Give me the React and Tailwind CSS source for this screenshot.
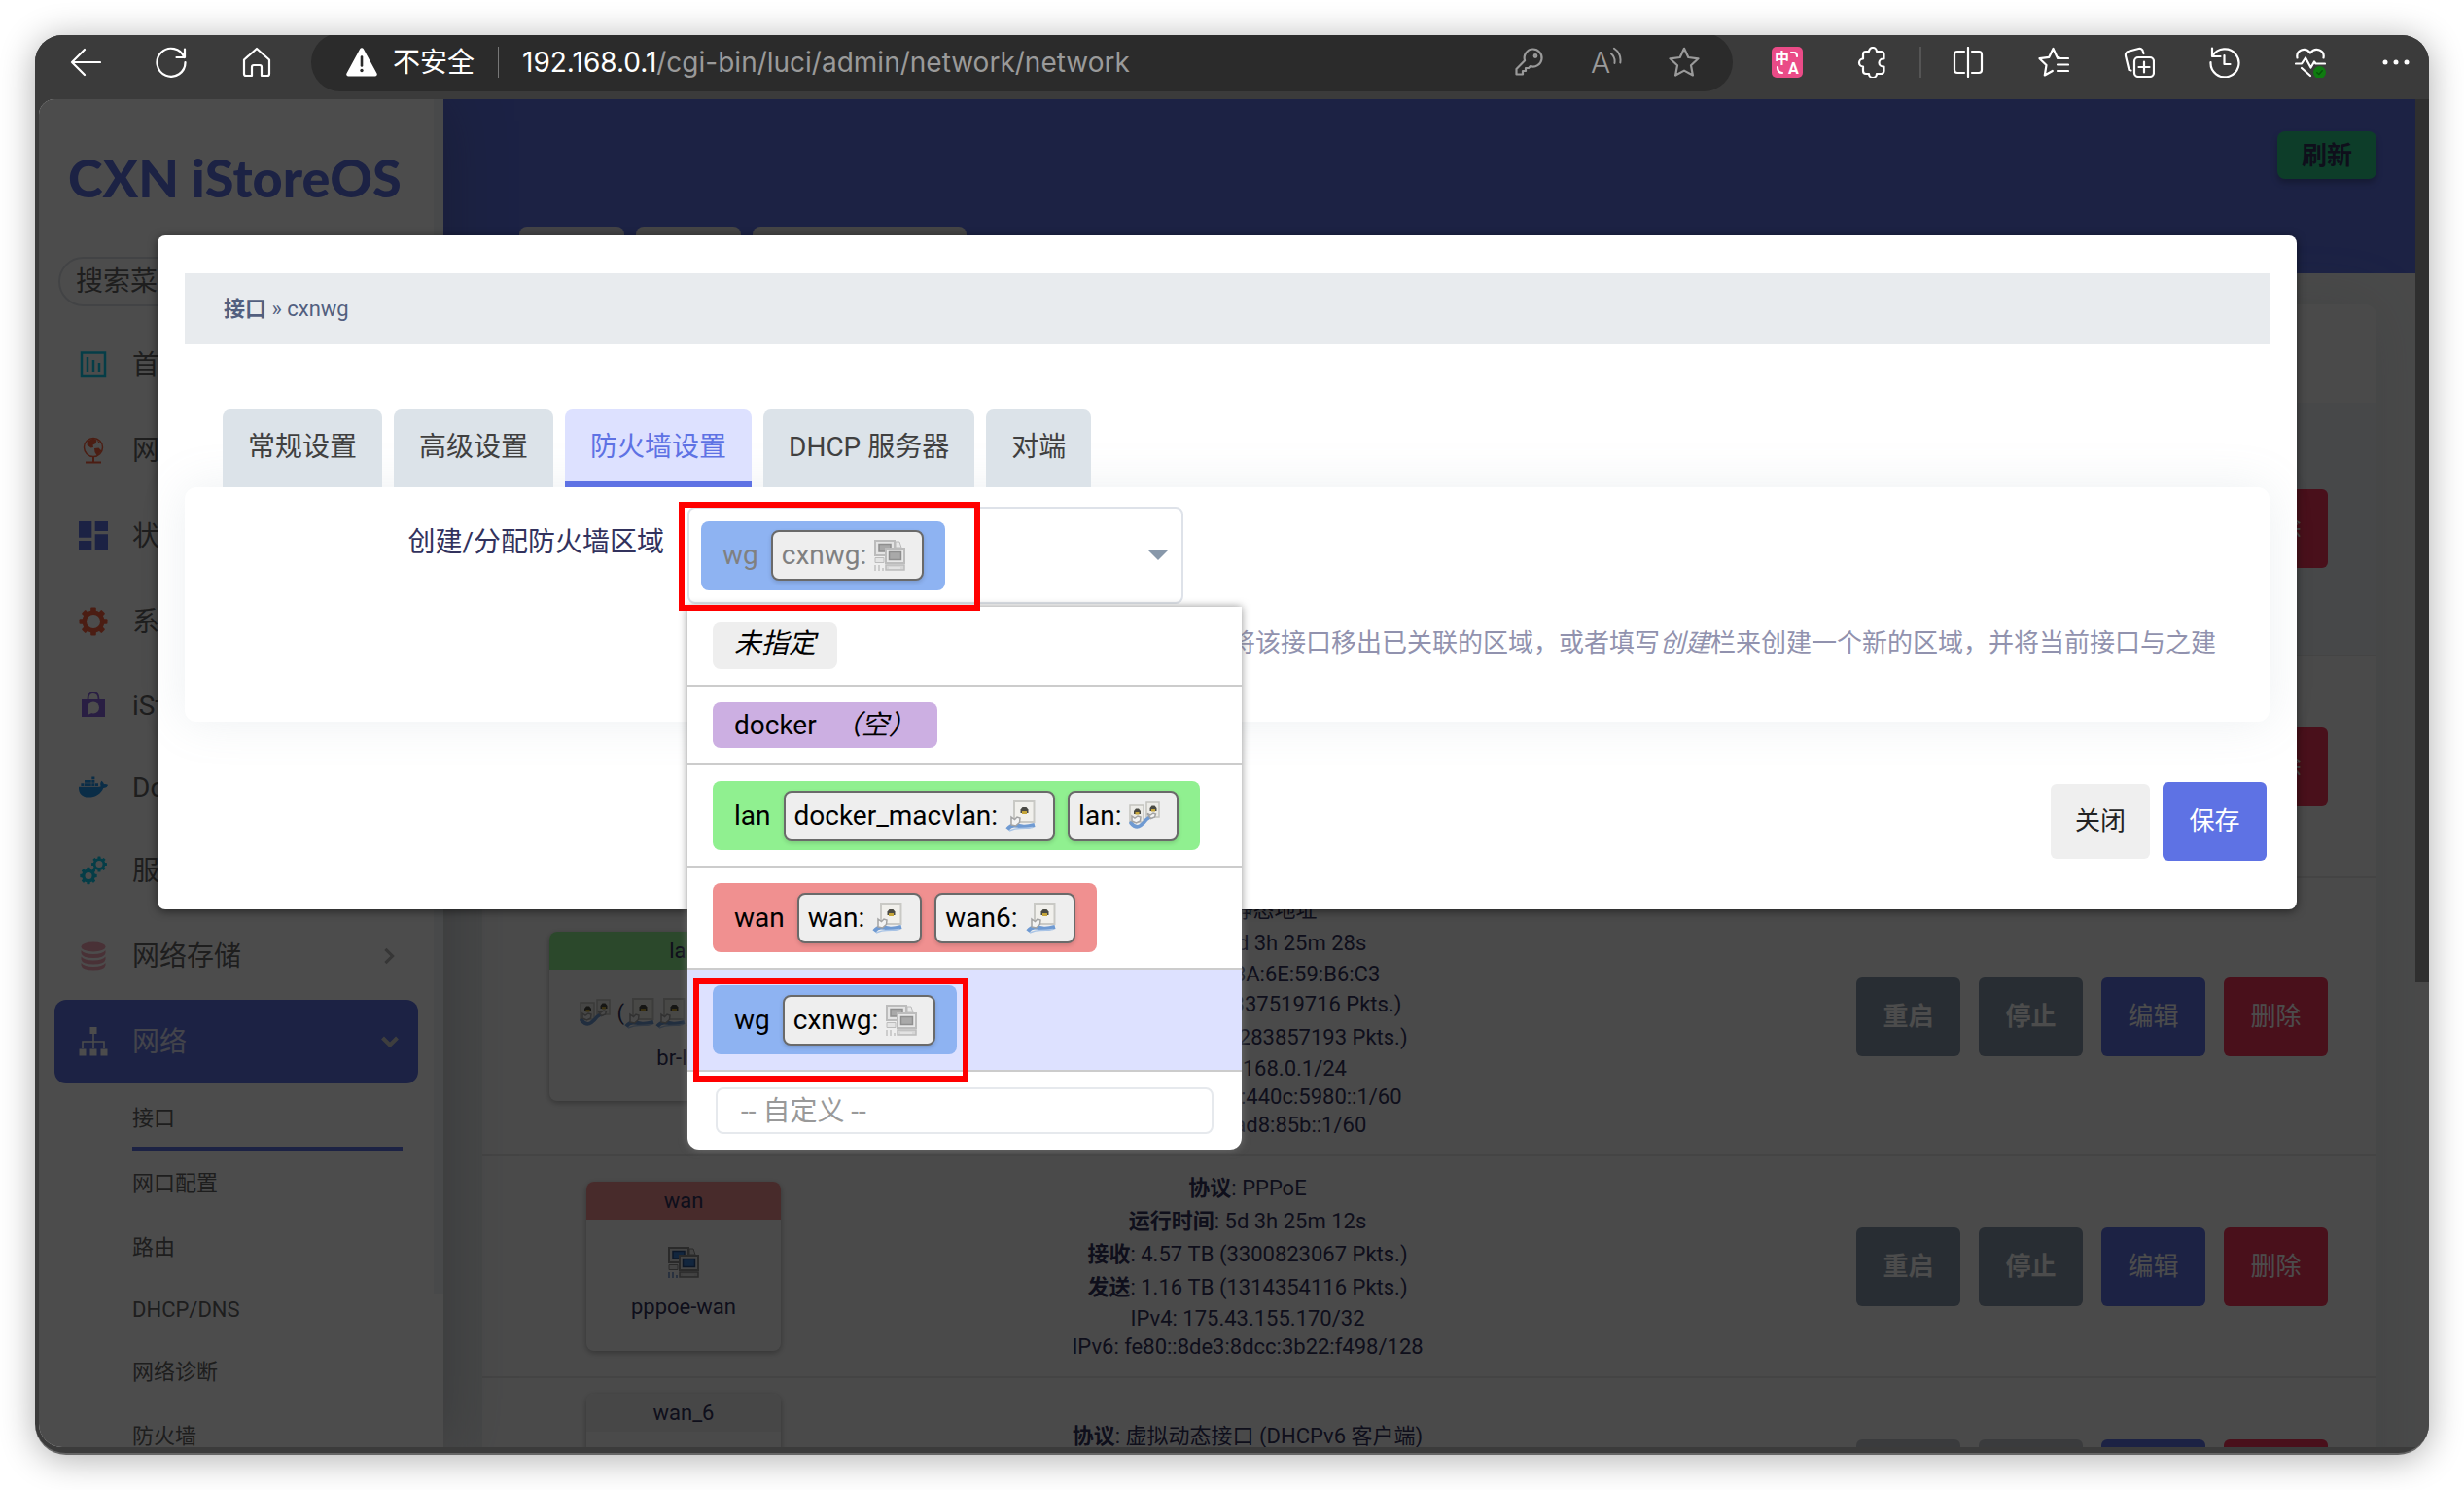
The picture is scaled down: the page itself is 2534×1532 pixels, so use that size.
import React from "react";
import { FaDocker } from "react-icons/fa";
import { MdDashboard } from "react-icons/md";

/* ---------- toolbar icons ---------- */

function Line({ children, className = "size-8 text-white" }) {
  return (
    <svg viewBox="0 0 32 32" className={className} fill="none" stroke="currentColor" strokeWidth="2.2" strokeLinecap="round" strokeLinejoin="round" aria-hidden="true">
      {children}
    </svg>
  );
}

const BackIcon = () => (
  <Line>
    <path d="M15 3 2 16l13 13M2 16h29" />
  </Line>
);
const ReloadIcon = () => (
  <Line>
    <path d="M29.5 11A14.5 14.5 0 1 0 30.5 16M30 2.500v8.500h-8.500" />
  </Line>
);
const HomeIcon = () => (
  <Line>
    <path d="M3 13.500 16 2l13 11.500V28a2 2 0 0 1-2 2h-6V21a2 2 0 0 0-2-2h-6a2 2 0 0 0-2 2v9H5a2 2 0 0 1-2-2z" />
  </Line>
);
const WarningIcon = () => (
  <svg viewBox="0 0 32 32" className="size-8 text-white" aria-hidden="true">
    <path d="M14.200 2.200a2.100 2.100 0 0 1 3.600 0L31.500 27.500a2.100 2.100 0 0 1-1.800 3.100H2.300a2.100 2.100 0 0 1-1.800-3.100z" fill="currentColor" />
    <path d="M16 10.500v9" stroke="#2b2b2b" strokeWidth="2.600" strokeLinecap="round" />
    <circle cx="16" cy="24.500" r="1.700" fill="#2b2b2b" />
  </svg>
);
const KeyIcon = () => (
  <Line className="size-8 text-[#9a9a9a]">
    <path d="M20 3a9 9 0 1 1-2.600 17.600L15.500 22.500H12.500v3H9.500v3.500H3v-5.500L11.600 14.800A9 9 0 0 1 20 3z" transform="translate(.5 -.5)" />
    <circle cx="23" cy="9.500" r="1.300" />
  </Line>
);
const ReadAloudIcon = () => (
  <span className="flex size-8 items-center text-[#9a9a9a]">
    <span className="text-[30px] leading-8 font-light">A</span>
    <svg viewBox="0 0 12 32" className="h-8 w-3" fill="none" stroke="currentColor" strokeWidth="2" strokeLinecap="round" aria-hidden="true">
      <path d="M1 7q4.500 4 3.500 10M4 1.500q8 5.500 6.500 15" />
    </svg>
  </span>
);
const StarIcon = () => (
  <Line className="size-8 text-[#9a9a9a]">
    <path d="m16 1.800 4.300 9.200 10.200 1.300-7.500 7 1.900 10.200L16 24.600 7.100 29.500 9 19.300l-7.500-7L11.700 11z" />
  </Line>
);
const TranslateIcon = () => (
  <svg viewBox="0 0 32 32" className="size-8" aria-hidden="true">
    <rect width="32" height="32" rx="5" fill="#ea4b87" />
    <text x="3" y="17" fontSize="15" fontWeight="700" fill="#fff">中</text>
    <text x="17" y="28" fontSize="16" fontWeight="700" fill="#fff">A</text>
    <path d="M20 6h3q3 0 3 4M6 21q0 6 5 6" fill="none" stroke="#fff" strokeWidth="2.200" strokeLinecap="round" />
  </svg>
);
const PuzzleIcon = () => (
  <Line>
    <path d="M6 8a3 3 0 0 1 3-3h3a4 4 0 0 1 8 0h4.500a3 3 0 0 1 3 3v4.500h-1a4 4 0 0 0 0 8h1V25a3 3 0 0 1-3 3H20a4 4 0 0 1-8 0H9a3 3 0 0 1-3-3v-4.500a4 4 0 0 1 0-8z" />
  </Line>
);
const SplitIcon = () => (
  <Line>
    <path d="M12 5H5a3 3 0 0 0-3 3v16a3 3 0 0 0 3 3h7M20 5h7a3 3 0 0 1 3 3v16a3 3 0 0 1-3 3h-7M16 1v30" />
  </Line>
);
const FavoritesIcon = () => (
  <Line>
    <path d="M22 11.500 19.500 10.800 15.500 2 11.300 10.800 1.500 12.200l7 6.800-1.700 10.500 8-4.500M20 12h11M20 18.500h11M20 25h11" />
  </Line>
);
const CollectionsIcon = () => (
  <Line>
    <rect x="11" y="11" width="20" height="20" rx="4" />
    <path d="M21 15.500v11M15.500 21h11M7.500 24.500 5.500 24 2 9.500a4 4 0 0 1 3-4.800L15.500 2a3.500 3.500 0 0 1 4.300 2.600L20.500 7" />
  </Line>
);
const HistoryIcon = () => (
  <Line>
    <path d="M3 1.500V10h8.500M3.500 9.500A14.500 14.500 0 1 1 1.500 16M15.500 9v9h6" />
  </Line>
);
const HealthIcon = () => (
  <Line>
    <path d="M2.500 11.500C1 4 10.500-.5 16 6.500c5.500-7 15-2.500 13.500 5M1 17.500h6l4-6 5.500 10 3.500-6 1.500 2H31M7 22l9 8" />
    <circle cx="25.500" cy="26.500" r="6.500" fill="#0f7b10" stroke="none" />
    <path d="m22.800 26.700 2 1.800 3.400-3.800" stroke="#07530a" strokeWidth="1.500" />
  </Line>
);
const MoreIcon = () => (
  <svg viewBox="0 0 32 32" className="size-8 text-white" fill="currentColor" aria-hidden="true">
    <circle cx="5" cy="16" r="2.500" />
    <circle cx="16" cy="16" r="2.500" />
    <circle cx="27" cy="16" r="2.500" />
  </svg>
);

/* ---------- sidebar icons ---------- */

const Bars = () => (
  <svg viewBox="0 0 28 28" className="size-7" fill="none" stroke="#11cdef" aria-hidden="true">
    <path d="M2 1.500h24v24.500H2z" strokeWidth="2.500" />
    <path d="M8 6v15M14 9v12M20 12v9" strokeWidth="2.500" />
  </svg>
);
const Globe = () => (
  <svg viewBox="0 0 28 28" className="size-7" aria-hidden="true">
    <circle cx="14" cy="11" r="9.500" fill="none" stroke="#fb6340" strokeWidth="1.500" />
    <path d="M8 4.500 14 1.500l3.500 2-1 3.500-3 1.500.5 2.500-2.500.5-4-3zM15 12l4.500-.5 3 3L18 20l-2.500-4zM18 3.500l3 2.500-1.500 1z" fill="#fb6340" />
    <path d="M6 26.500h16M14 21v5" stroke="#fb6340" strokeWidth="2" fill="none" />
  </svg>
);
function GearShape({ cx, cy, s }) {
  return (
    <g transform={`translate(${cx} ${cy}) scale(${s})`}>
      {[0, 45, 90, 135].map((a) => (
        <rect key={a} x="-2.8" y="-14.500" width="5.600" height="29" rx="1" transform={`rotate(${a})`} />
      ))}
      <circle r="11.500" />
    </g>
  );
}
const Gear = () => (
  <svg viewBox="0 0 30 30" className="size-[30px]" aria-hidden="true">
    <defs>
      <mask id="gear-hole">
        <rect width="30" height="30" fill="#fff" />
        <circle cx="15" cy="15" r="7" fill="#000" />
      </mask>
    </defs>
    <g fill="#fb6340" mask="url(#gear-hole)">
      <GearShape cx={15} cy={15} s={1} />
    </g>
  </svg>
);
const Gears = () => (
  <svg viewBox="0 0 30 30" className="size-[30px]" aria-hidden="true">
    <defs>
      <mask id="gears-hole">
        <rect width="30" height="30" fill="#fff" />
        <circle cx="10" cy="20.500" r="3.500" fill="#000" />
        <circle cx="21" cy="8.500" r="3.500" fill="#000" />
      </mask>
    </defs>
    <g fill="#11cdef" mask="url(#gears-hole)">
      <GearShape cx={10} cy={20.5} s={0.6} />
      <GearShape cx={21} cy={8.5} s={0.55} />
    </g>
  </svg>
);
const Bag = () => (
  <svg viewBox="0 0 28 28" className="size-7" aria-hidden="true">
    <path d="M2 8h24v18H2z" fill="#8965e0" />
    <path d="M8.500 8q0-7 5.500-7t5.500 7" fill="none" stroke="#8965e0" strokeWidth="1.800" />
    <circle cx="14" cy="16.500" r="6" fill="#fff" />
    <path d="m8 24 1.500-6 4 3.500z" fill="#fff" />
  </svg>
);
const Disks = () => (
  <svg viewBox="0 0 28 30" className="h-[30px] w-7" fill="#f3a4b5" aria-hidden="true">
    <ellipse cx="14" cy="5.500" rx="12.500" ry="5" />
    <path d="M1.500 9q3 4 12.500 4t12.500-4v3q-1 5-12.500 5T1.500 12zM1.500 15.500q3 4 12.500 4t12.500-4v3q-1 5-12.500 5t-12.500-5zM1.500 22q3 4 12.500 4t12.500-4v2.500q-1 5-12.500 5t-12.500-5z" />
  </svg>
);
const Tree = () => (
  <svg viewBox="0 0 30 30" className="size-[30px]" aria-hidden="true">
    <path d="M11.500 0h7v7h-7zM.5 22.500h7v7h-7zM11.500 22.500h7v7h-7zM22.500 22.500h7v7h-7z" fill="#fff" />
    <path d="M15 7v15M4 22v-7h22v7" fill="none" stroke="#fff" strokeWidth="1.500" />
  </svg>
);

/* ---------- network device icons ---------- */

function TunnelIcon({ active = false }) {
  const screen = active ? "#3f7fd0" : "#a9a9a9";
  const edge = active ? "#8c8c8c" : "#bcbcbc";
  return (
    <svg viewBox="0 0 32 32" className="size-8 shrink-0" aria-hidden="true">
      <path d="M22 2h4l2 6h-6z" fill="#e8e8e8" stroke={edge} />
      <rect x="1" y="1" width="20" height="15" fill="#e4e4e4" stroke={edge} strokeWidth="2" />
      <rect x="5" y="4.500" width="12" height="7.500" fill={screen} stroke={active ? "#2b4f86" : "#8f8f8f"} strokeWidth="1.500" />
      <path d="M1 18.500h9v5H1z" fill="#e4e4e4" stroke={edge} />
      <path d="M1 26v6M5 26v6M9 29v3" stroke={active ? "#6d92c8" : "#c4c4c4"} strokeWidth="1.600" />
      <rect x="12" y="9" width="19" height="15" fill="#e8e8e8" stroke={edge} strokeWidth="2" />
      <rect x="15.500" y="12.500" width="12" height="8" fill={screen} stroke={active ? "#2b4f86" : "#8f8f8f"} strokeWidth="1.500" />
      <path d="M12 26h19v5H12z" fill="#d6d6d6" stroke={edge} strokeWidth="1.500" />
      <path d="M15 29h12" stroke="#eee" />
    </svg>
  );
}
function PortIcon() {
  return (
    <svg viewBox="0 0 32 32" className="size-8 shrink-0" aria-hidden="true">
      <rect x="9" y="1" width="20.500" height="21" fill="#f1f0ec" stroke="#c9c9c5" strokeWidth="2" />
      <path d="M15.500 13V9.500L17.500 7h4L23.500 9.500V13z" fill="#4a4a44" />
      <path d="M17 11h5v3h-5z" fill="#c6a63a" />
      <path d="M2 29.500q3-4 7-4t8 1 13-1.500" fill="none" stroke="#6f9ad2" strokeWidth="4" />
      <path d="M4 31q6-2.500 11-2.500t13-1" fill="none" stroke="#a9c4e6" strokeWidth="1.500" />
      <path d="m6 17 3.500 2.500L12 17l3 1-.5 4.500-4 3.500-4.500-1z" fill="#f3f3f3" stroke="#a3a3a3" strokeWidth="1.500" />
    </svg>
  );
}
function SwitchIcon() {
  return (
    <svg viewBox="0 0 32 32" className="size-8 shrink-0" aria-hidden="true">
      <rect x="18" y="2" width="13" height="15" fill="#ecebe7" stroke="#c3c3bf" strokeWidth="1.500" />
      <rect x="1" y="5" width="14" height="17" fill="#ecebe7" stroke="#c3c3bf" strokeWidth="1.500" />
      <path d="M21.500 11V8l2-2.500h3l2 2.500v3zM5 14v-3l2-2.500h3l2 2.500v3z" fill="#4a4a44" />
      <path d="M23 9h4v2.500h-4zM6.500 12h4v2.500h-4z" fill="#c6a63a" />
      <path d="M2 23q5 6 10 2.500 4-3 6-6 2-2 6-3" fill="none" stroke="#6f9ad2" strokeWidth="3.600" strokeLinecap="round" />
      <path d="m3 16 3 2 3-2 3 1-.5 4-4 2-4.500-2zM19 13.500l3 1.500 3-2 2.500 1-1 3-4 1.500z" fill="#f3f3f3" stroke="#a3a3a3" strokeWidth="1.500" />
    </svg>
  );
}

/* ---------- browser toolbar ---------- */

function ToolButton({ label, children }) {
  return (
    <button type="button" aria-label={label} className="size-8 shrink-0">
      {children}
    </button>
  );
}

function BrowserBar() {
  return (
    <header className="flex h-[66px] shrink-0 items-center bg-[#3b3b3b] pr-[18px] pb-2.5 pl-9">
      <div className="flex gap-14">
        <ToolButton label="后退"><BackIcon /></ToolButton>
        <ToolButton label="刷新页面"><ReloadIcon /></ToolButton>
        <ToolButton label="主页"><HomeIcon /></ToolButton>
      </div>
      <div className="mx-10 flex h-[60px] flex-1 items-center rounded-full bg-[#2b2b2b] pr-[34px] pl-9 font-['Inter','Noto_Sans_CJK_SC',sans-serif] text-[28px] text-white">
        <WarningIcon />
        <span className="ml-4">不安全</span>
        <span className="mx-6 h-8 w-px bg-[#777]" />
        <span className="flex-1 text-[#9a9a9a]">
          <span className="text-white">192.168.0.1</span>/cgi-bin/luci/admin/network/network
        </span>
        <div className="flex gap-12">
          <ToolButton label="密码"><KeyIcon /></ToolButton>
          <ToolButton label="大声朗读"><ReadAloudIcon /></ToolButton>
          <ToolButton label="收藏此页"><StarIcon /></ToolButton>
        </div>
      </div>
      <div className="flex gap-14">
        <ToolButton label="翻译"><TranslateIcon /></ToolButton>
        <ToolButton label="扩展"><PuzzleIcon /></ToolButton>
      </div>
      <span className="mx-8 h-8 w-0.5 bg-[#555]" />
      <div className="flex gap-14">
        <ToolButton label="分屏"><SplitIcon /></ToolButton>
        <ToolButton label="收藏夹"><FavoritesIcon /></ToolButton>
        <ToolButton label="集锦"><CollectionsIcon /></ToolButton>
        <ToolButton label="历史记录"><HistoryIcon /></ToolButton>
        <ToolButton label="浏览器概要"><HealthIcon /></ToolButton>
        <ToolButton label="更多"><MoreIcon /></ToolButton>
      </div>
    </header>
  );
}

/* ---------- sidebar ---------- */

const menu = [
  { icon: <Bars />, text: "首页" },
  { icon: <Globe />, text: "网络向导" },
  { icon: <MdDashboard className="size-10 shrink-0 text-[#5e72e4]" />, text: "状态" },
  { icon: <Gear />, text: "系统" },
  { icon: <Bag />, text: "iStore", latin: true },
  { icon: <FaDocker className="size-[30px] text-[#2496ed]" />, text: "Docker", latin: true },
  { icon: <Gears />, text: "服务" },
];
const submenu = [
  { text: "网口配置" },
  { text: "路由" },
  { text: "DHCP/DNS", latin: true },
  { text: "网络诊断" },
  { text: "防火墙" },
];

function MenuRow({ icon, text, latin, children }) {
  return (
    <a href="#menu" className={`mx-4 flex items-center gap-6 pr-6 pl-6 text-[28px] text-[#666] ${latin ? "h-[84px]" : "h-[88px]"}`}>
      <span className="flex w-8 justify-center">{icon}</span>
      <span className="flex-1 pt-0.5">{text}</span>
      {children}
    </a>
  );
}

function Sidebar() {
  return (
    <aside className="z-10 flex w-[416px] shrink-0 bg-white shadow-[0_0_64px_rgba(60,70,85,0.35)]">
      <div className="min-w-0 flex-1">
        <h1 className="flex h-[160px] items-center pl-[30px] font-['Lato',sans-serif] text-[54px] font-black whitespace-nowrap text-[#5e72e4]">CXN iStoreOS</h1>
        <div className="mx-5 mt-0.5 mb-4">
          <input aria-label="搜索菜单" placeholder="搜索菜单" className="h-[51px] w-full rounded-full border-2 border-[#dee2e6] px-4 text-[28px] placeholder:text-[#666]" />
        </div>
        <nav>
          {menu.map((m) => (
            <MenuRow key={m.text} {...m} />
          ))}
          <MenuRow icon={<Disks />} text="网络存储">
            <svg viewBox="0 0 12 20" className="h-[18px] w-3" fill="none" stroke="#b4b4b4" strokeWidth="3.500" aria-hidden="true">
              <path d="m2 2 8 8-8 8" />
            </svg>
          </MenuRow>
          <a href="#network" className="mx-4 my-px flex h-[86px] items-center gap-6 rounded-xl bg-[#5e72e4] pr-5 pl-6 text-[28px] text-white/80">
            <span className="flex w-8 justify-center"><Tree /></span>
            <span className="flex-1 pt-0.5">网络</span>
            <svg viewBox="0 0 18 12" className="h-3 w-[18px]" fill="none" stroke="#d0d0d0" strokeWidth="4" aria-hidden="true">
              <path d="m1.500 2 7.500 7.500L16.500 2" />
            </svg>
          </a>
          <div className="mr-8 ml-24 text-[22px] text-[#666]">
            <a href="#interface" className="flex h-[68px] items-center border-b-4 border-[#5e72e4] pt-1">接口</a>
            {submenu.map((s) => (
              <a key={s.text} href="#sub" className={`flex items-center ${s.latin ? "h-[62px]" : "h-[66px]"}`}>{s.text}</a>
            ))}
          </div>
        </nav>
      </div>
      <div className="w-2.5">
        <div className="h-[1228px] bg-[#f1f3f7]" />
      </div>
    </aside>
  );
}

/* ---------- interface table ---------- */

function ZoneCard({ name, head, device, width, children }) {
  return (
    <div className={`mx-auto overflow-hidden rounded-lg text-center text-[22px] shadow-[0_2px_6px_rgba(0,0,0,0.3)] ${width}`}>
      <div className={`flex h-[39px] items-center justify-center ${head}`}>{name}</div>
      <div className="h-[135px] pt-7">
        <div className="flex items-center justify-center">{children}</div>
        <div className="mt-4 leading-7">{device}</div>
      </div>
    </div>
  );
}

function Info({ rows }) {
  return rows.map(([label, value, bold = true]) => (
    <div key={label + value} className={`text-[22px] ${bold ? "h-[34px] leading-[34px]" : "h-[29px] leading-[29px]"}`}>
      {bold ? <b>{label}</b> : label}: {value}
    </div>
  ));
}

function Actions({ disabled = false }) {
  const btn = "h-[81px] w-[107px] rounded-md text-[26px] text-white";
  const gray = disabled ? "bg-[#c3c6cb]" : "bg-[#8898aa]";
  return (
    <div className="flex justify-end gap-[19px] pr-[50px]">
      <button type="button" className={`${btn} ${gray} font-bold`}>重启</button>
      <button type="button" className={`${btn} ${gray} font-bold`}>停止</button>
      <button type="button" className={`${btn} bg-[#5e72e4]`}>编辑</button>
      <button type="button" className={`${btn} bg-[#f5365c]`}>删除</button>
    </div>
  );
}

function InterfaceRow({ height, className = "", zone, info, disabled }) {
  return (
    <tr className={`border-b-2 border-[#e3e3e3] ${height} ${className}`}>
      <td className="w-[414px]">{zone}</td>
      <td className="w-[746px] text-center">{info}</td>
      <td><Actions disabled={disabled} /></td>
    </tr>
  );
}

function NetworkPage() {
  return (
    <main className="min-w-0 flex-1 overflow-hidden bg-[linear-gradient(#5e72e4_179px,#f4f5f5_179px)] px-10 pt-[33px] text-[#32325d]">
      <div className="flex justify-end">
        <button type="button" className="h-[49px] w-[102px] rounded-lg bg-[#2dce89] text-[26px] leading-9 font-bold shadow-[0_4px_6px_rgba(0,0,0,0.25)]">刷新</button>
      </div>
      <div className="mt-[49px] ml-[38px] flex gap-3">
        <div className="h-20 w-[108px] rounded-t-lg bg-[#e2e0ea]" />
        <div className="h-20 w-[108px] rounded-t-lg bg-[#e6e6e6]" />
        <div className="h-20 w-[220px] rounded-t-lg bg-[#e6e6e6]" />
      </div>
      <section className="rounded-xl bg-[#f9f9f9] pt-[101px] shadow-[0_0_64px_rgba(136,152,170,0.15)]">
        <table className="w-full table-fixed border-collapse">
          <tbody>
            <InterfaceRow height="h-[260px]" className="bg-[#edf0f4]" />
            <InterfaceRow height="h-[228px]" />
            <InterfaceRow
              height="h-[286px]"
              zone={
                <ZoneCard name="lan" head="bg-[#90f090]" device="br-lan" width="w-[276px]">
                  <SwitchIcon />
                  <span className="pl-1.5">(</span>
                  <PortIcon /><PortIcon /><PortIcon /><PortIcon /><PortIcon />
                  <span>)</span>
                </ZoneCard>
              }
              info={
                <Info
                  rows={[
                    ["协议", "静态地址"],
                    ["运行时间", "5d 3h 25m 28s"],
                    ["MAC", "7C:2B:8A:6E:59:B6:C3", false],
                    ["接收", "1.25 TB (337519716 Pkts.)"],
                    ["发送", "4.71 TB (1283857193 Pkts.)"],
                    ["IPv4", "192.168.0.1/24", false],
                    ["IPv6", "fd8b:3ec3:440c:5980::1/60", false],
                    ["IPv6", "2408:ad8:85b::1/60", false],
                  ]}
                />
              }
            />
            <InterfaceRow
              height="h-[228px]"
              zone={
                <ZoneCard name="wan" head="bg-[#f09090]" device="pppoe-wan" width="w-[200px]">
                  <TunnelIcon active />
                </ZoneCard>
              }
              info={
                <Info
                  rows={[
                    ["协议", "PPPoE"],
                    ["运行时间", "5d 3h 25m 12s"],
                    ["接收", "4.57 TB (3300823067 Pkts.)"],
                    ["发送", "1.16 TB (1314354116 Pkts.)"],
                    ["IPv4", "175.43.155.170/32", false],
                    ["IPv6", "fe80::8de3:8dcc:3b22:f498/128", false],
                  ]}
                />
              }
            />
            <InterfaceRow
              height="h-[208px]"
              disabled
              zone={<ZoneCard name="wan_6" head="bg-[#eeeeee]" width="w-[200px]" />}
              info={
                <Info
                  rows={[
                    ["协议", "虚拟动态接口 (DHCPv6 客户端)"],
                    ["运行时间", "5d 3h 25m 12s", false],
                    ["IPv6", "fe80::1/64", false],
                    ["IPv6-PD", "fe80::/60", false],
                  ]}
                />
              }
            />
          </tbody>
        </table>
      </section>
    </main>
  );
}

/* ---------- zone drop-down ---------- */

function Chip({ name, icon }) {
  return (
    <span className="flex h-[52px] items-center gap-2 rounded-lg border-2 border-[#6a6a6a] bg-[#eee] pr-[17px] pl-[9px] shadow-[0_2px_4px_rgba(0,0,0,0.15)]">
      {name}:
      {icon}
    </span>
  );
}

function Badge({ color, name, children }) {
  return (
    <span className={`flex h-[71px] w-fit items-center gap-[13px] rounded-lg px-[22px] ${color}`}>
      {name}
      {children}
    </span>
  );
}

function Mark({ className }) {
  return <span aria-hidden="true" className={`pointer-events-none absolute border-6 border-[#ff0000] ${className}`} />;
}

function ZoneSelect() {
  const row = "border-b-2 border-[#ccc] px-[26px] py-4";
  return (
    <div className="relative w-[510px] text-[28px] text-black">
      <button type="button" id="zone" aria-haspopup="listbox" aria-expanded="true" className="flex h-[100px] w-full items-center justify-between rounded-lg border-2 border-[#dee2e9] pr-[14px] pl-3 text-[#808080]">
        <Badge color="bg-[#8eb3f2]" name="wg">
          <Chip name="cxnwg" icon={<TunnelIcon />} />
        </Badge>
        <svg viewBox="0 0 20 10" className="h-2.5 w-5" aria-hidden="true">
          <path d="M0 0h20L10 10z" fill="#8898aa" />
        </svg>
      </button>
      <ul role="listbox" aria-label="防火墙区域" className="absolute top-full left-0 mt-[3px] w-[570px] rounded-b-xl bg-white shadow-[0_0_8px_rgba(120,120,120,0.8)]">
        <li role="option" aria-selected="false" className={row}>
          <em className="flex h-12 w-fit items-center rounded-lg bg-[#eee] px-[22px] pb-1">未指定</em>
        </li>
        <li role="option" aria-selected="false" className={row}>
          <span className="flex h-[47px] w-fit items-center gap-[18px] rounded-lg bg-[#ccafe2] pr-[22px] pl-[22px]">
            docker <em>（空）</em>
          </span>
        </li>
        <li role="option" aria-selected="false" className={row}>
          <Badge color="bg-[#90f090]" name="lan">
            <Chip name="docker_macvlan" icon={<PortIcon />} />
            <Chip name="lan" icon={<SwitchIcon />} />
          </Badge>
        </li>
        <li role="option" aria-selected="false" className={row}>
          <Badge color="bg-[#f09090]" name="wan">
            <Chip name="wan" icon={<PortIcon />} />
            <Chip name="wan6" icon={<PortIcon />} />
          </Badge>
        </li>
        <li role="option" aria-selected="true" className={`relative bg-[#dde1ff] ${row}`}>
          <Badge color="bg-[#8eb3f2]" name="wg">
            <Chip name="cxnwg" icon={<TunnelIcon />} />
          </Badge>
          <Mark className="top-[9px] left-1.5 h-[106px] w-[283px]" />
        </li>
        <li className="px-[29px] py-4">
          <input aria-label="自定义" placeholder="-- 自定义 --" className="block h-12 w-full rounded-lg border-2 border-[#e6e9ed] px-6 text-[28px] placeholder:text-[#999]" />
        </li>
      </ul>
      <Mark className="-top-[5px] -left-[9px] h-28 w-[310px]" />
    </div>
  );
}

/* ---------- dialog ---------- */

const tabs = ["常规设置", "高级设置", "防火墙设置", "DHCP 服务器", "对端"];

function InterfaceDialog() {
  return (
    <div role="dialog" aria-label="接口 » cxnwg" className="rounded-lg bg-white px-7 pt-[39px] pb-[50px] shadow-[0_2px_10px_rgba(0,0,0,0.5)]">
      <h2 className="flex h-[73px] items-center bg-[#e8ebee] px-10 text-[22px] text-[#525f7f]">
        <b>接口</b>&nbsp;» cxnwg
      </h2>
      <div role="tablist" className="mt-[67px] ml-[39px] flex gap-3">
        {tabs.map((t) => (
          <button
            key={t}
            type="button"
            role="tab"
            aria-selected={t === "防火墙设置"}
            className={`h-20 rounded-t-lg px-[26px] text-[28px] ${t === "防火墙设置" ? "border-b-6 border-[#5e72e4] bg-[#dde1ff] pt-1 text-[#5e72e4]" : "bg-[#dce3e9] pb-0.5 text-[#404040]"}`}
          >
            {t}
          </button>
        ))}
      </div>
      <section className="flex gap-6 rounded-xl bg-white pt-5 pb-[21px] shadow-[0_0_48px_rgba(136,152,170,0.15)]">
        <label htmlFor="zone" className="w-[493px] shrink-0 pt-4 text-right text-[28px] leading-[42px] text-[#32325d]">创建/分配防火墙区域</label>
        <div className="flex-1">
          <ZoneSelect />
          <p className="mt-5 pr-10 pl-3 text-[26px] leading-10 text-[#9192ae]">
            为此接口分配所属的防火墙区域，选择<em>未指定</em>可将该接口移出已关联的区域，或者填写<em>创建</em>栏来创建一个新的区域，并将当前接口与之建立关联。
          </p>
        </div>
      </section>
      <footer className="mt-[62px] flex items-center justify-end gap-[13px] pr-[3px] text-[26px]">
        <button type="button" className="h-[77px] w-[102px] rounded-md bg-[#efefef] text-[#222]">关闭</button>
        <button type="button" className="h-[81px] w-[107px] rounded-md bg-[#5e72e4] text-white">保存</button>
      </footer>
    </div>
  );
}

export default function App() {
  return (
    <div className="h-screen bg-white p-9 font-['Roboto','Noto_Sans_CJK_SC',sans-serif]" lang="zh-CN">
      <div className="flex h-full flex-col overflow-hidden rounded-t-[28px] rounded-b-[32px] border-b-2 border-[#666] bg-[#3b3b3b] shadow-[0_4px_36px_rgba(0,0,0,0.32)]">
        <BrowserBar />
        <div className="flex min-h-0 flex-1 pb-1.5 pl-1">
          <div className="relative flex min-w-0 flex-1 overflow-hidden rounded-tl-2xl rounded-bl-3xl">
            <Sidebar />
            <NetworkPage />
            <div className="absolute inset-0 z-20 bg-black/70 px-[122px] pt-[140px]">
              <InterfaceDialog />
            </div>
          </div>
          <div className="w-3.5 bg-[#494949]">
            <div className="h-[908px] bg-[#2f2f2f]" />
          </div>
        </div>
      </div>
    </div>
  );
}
